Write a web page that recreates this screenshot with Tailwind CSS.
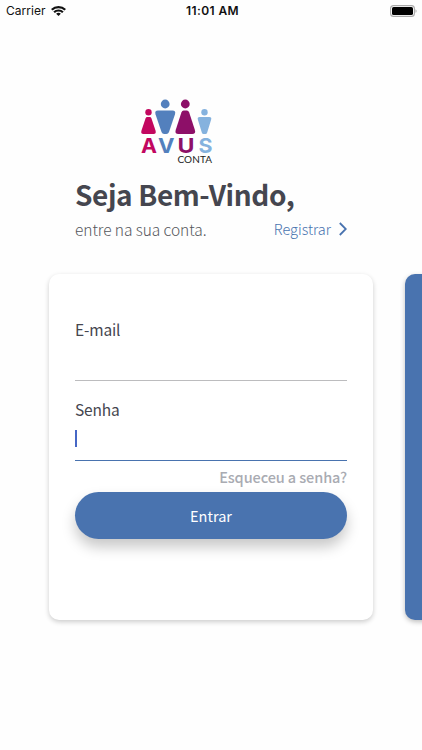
<!DOCTYPE html>
<html lang="pt-BR">
<head>
<meta charset="utf-8">
<meta name="viewport" content="width=device-width, initial-scale=1">
<title>Avus Conta</title>
<script src="https://cdn.jsdelivr.net/npm/@tailwindcss/browser@4"></script>
</head>
<body class="bg-[#fefefe] font-['Noto_Sans_CJK_JP',sans-serif] text-[#45464f]">
<div class="flex h-[750px] w-full flex-col overflow-hidden whitespace-nowrap">
  <header class="grid h-[21px] shrink-0 grid-cols-3 items-center pr-[5px] pl-[6px] font-['Inter',sans-serif] text-[12px] leading-[21px] text-[#111]">
    <div class="flex items-center gap-[5px]">
      <span class="tracking-[0.05px]">Carrier</span>
      <svg class="h-[10px] w-[15px]" viewBox="0 0 14 10" fill="none" stroke="#111" stroke-width="2.1" preserveAspectRatio="none">
        <path d="M.7 3.7a9 9 0 0 1 12.6 0"/><path d="M2.9 6.200a5.800 5.800 0 0 1 8.200 0"/><path d="M7 10 4.800 7.800a3.100 3.100 0 0 1 4.400 0z" fill="#111" stroke="none"/>
      </svg>
    </div>
    <span class="pl-[2px] text-center text-[12px] font-semibold tracking-[0.4px]">11:01 AM</span>
    <svg class="h-[12px] w-[27px] justify-self-end" viewBox="0 0 27 12">
      <rect x=".6" y=".6" width="23.8" height="10.8" rx="3" fill="#fff" stroke="#a9a9a9" stroke-width="1.1"/>
      <rect x="2" y="2" width="21" height="8" rx="1.6" fill="#000"/>
      <path d="M25.5 4.2c1.4.5 1.4 3.1 0 3.600z" fill="#a9a9a9"/>
    </svg>
  </header>

  <section class="flex shrink-0 flex-col px-[75px] pt-[75px]">
    <svg class="ml-[63px] h-[72px] w-[78px]" viewBox="138 96 78 72">
      <g fill="#c2075f"><circle cx="148.500" cy="112.300" r="3.200"/><path d="M147.200 117h2.600q1.100 0 1.600 1.200l4.200 12.600q.8 3.200-2 3.200h-10.200q-2.800 0-2-3.200l4.200-12.600q.5-1.200 1.600-1.200z"/></g>
      <g fill="#5380bd"><circle cx="165.200" cy="104" r="4.400"/><path d="M158 110.600h14.500q3.600 0 2.500 3.600l-6 17.800q-.8 2-2.600 2h-2.300q-1.800 0-2.600-2l-6-17.800q-1.100-3.600 2.500-3.600z"/></g>
      <g fill="#8d0f68"><circle cx="185.300" cy="104" r="4.400"/><path d="M183.700 110.600h3.200q1.600 0 2.300 1.800l5.700 17.600q1.200 4-2.700 4h-13.800q-3.900 0-2.700-4l5.700-17.600q.7-1.800 2.300-1.800z"/></g>
      <g fill="#85b2de"><circle cx="204.500" cy="112.300" r="3.200"/><path d="M199.700 117h9.600q2.700 0 1.800 2.700l-3.900 12.800q-.5 1.500-1.700 1.500h-2q-1.200 0-1.700-1.500l-3.900-12.800q-.9-2.700 1.800-2.700z"/></g>
      <g font-family="Inter, sans-serif" font-weight="700" font-size="20.500">
        <text x="141" y="153.300" textLength="16" lengthAdjust="spacingAndGlyphs" fill="#c2075f">A</text>
        <text x="158" y="153.300" textLength="16.500" lengthAdjust="spacingAndGlyphs" fill="#5380bd">V</text>
        <text x="177.500" y="153.300" textLength="17" lengthAdjust="spacingAndGlyphs" fill="#8d0f68">U</text>
        <text x="198.500" y="153.300" textLength="14" lengthAdjust="spacingAndGlyphs" fill="#85b2de">S</text>
      </g>
      <text x="177.500" y="162.700" textLength="34.500" font-family="Lato, sans-serif" font-size="10" fill="#222">CONTA</text>
    </svg>
    <h1 class="mt-[7px] h-[40px] text-[28px] leading-[38px] font-bold tracking-[-0.4px]">Seja Bem-Vindo,</h1>
    <div class="flex h-[28px] items-center justify-between text-[15.5px] leading-[28px] font-light">
      <p class="tracking-[-0.05px] text-[#55565c]">entre na sua conta.</p>
      <a class="flex items-center gap-[8px] text-[14.500px] text-[#4973af]">Registrar
        <svg class="h-[14px] w-[8px]" viewBox="0 0 8 14" fill="none" stroke="#4973af" stroke-width="1.8"><path d="M.8 1 6.800 7l-6 6"/></svg>
      </a>
    </div>
  </section>

  <main class="mt-[31px] flex gap-[32px] pl-[49px]">
    <form class="flex h-[346px] w-[324px] shrink-0 flex-col rounded-[10px] bg-white px-[26px] pt-[43px] shadow-[0_2px_5px_rgba(0,0,0,0.2)]">
      <label class="h-[24px] text-[15.5px] leading-[24px] tracking-[-0.15px]">E-mail</label>
      <div class="h-[40px] border-b border-[#bcbcbe]"></div>
      <label class="mt-[16px] h-[24px] text-[15.5px] leading-[24px] tracking-[-0.15px]">Senha</label>
      <div class="h-[40px] border-b border-[#4973af] pt-[9px]"><div class="h-[17px] w-[2px] bg-[#4667c5]"></div></div>
      <a class="h-[31px] text-right text-[14.5px] leading-[31px] font-medium tracking-[-0.1px] text-[#a9abb2]">Esqueceu a senha?</a>
      <button type="button" class="h-[47px] rounded-full bg-[#4973af] pt-[1px] text-[14.500px] leading-[24px] text-white shadow-[0_8px_14px_rgba(0,0,0,0.22)]">Entrar</button>
    </form>
    <div class="h-[346px] w-[324px] shrink-0 rounded-[10px] bg-[#4973af] shadow-[0_2px_5px_rgba(0,0,0,0.25)]"></div>
  </main>
</div>
</body>
</html>
